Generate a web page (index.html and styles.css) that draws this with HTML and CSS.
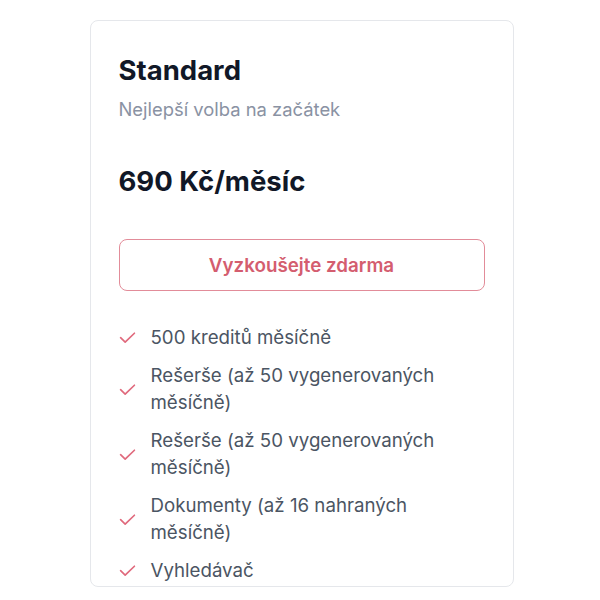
FILE: index.html
```html
<!DOCTYPE html>
<html lang="cs">
<head>
<meta charset="utf-8">
<title>Standard</title>
<link rel="stylesheet" href="styles.css">
</head>
<body>
<div class="page">
  <section class="plan">
    <h2 class="plan-name">Standard</h2>
    <p class="plan-tagline">Nejlepší volba na začátek</p>
    <p class="plan-price">690 Kč/měsíc</p>
    <button class="plan-cta" type="button">Vyzkoušejte zdarma</button>
    <ul class="features">
      <li class="feature"><svg class="check" viewBox="0 0 16 16"><path d="M1.5 8.2l4.3 4.1 8.7-8.3"/></svg><span>500 kreditů měsíčně</span></li>
      <li class="feature"><svg class="check" viewBox="0 0 16 16"><path d="M1.5 8.2l4.3 4.1 8.7-8.3"/></svg><span>Rešerše (až 50 vygenerovaných měsíčně)</span></li>
      <li class="feature"><svg class="check" viewBox="0 0 16 16"><path d="M1.5 8.2l4.3 4.1 8.7-8.3"/></svg><span>Rešerše (až 50 vygenerovaných měsíčně)</span></li>
      <li class="feature"><svg class="check" viewBox="0 0 16 16"><path d="M1.5 8.2l4.3 4.1 8.7-8.3"/></svg><span>Dokumenty (až 16 nahraných měsíčně)</span></li>
      <li class="feature"><svg class="check" viewBox="0 0 16 16"><path d="M1.5 8.2l4.3 4.1 8.7-8.3"/></svg><span>Vyhledávač</span></li>
    </ul>
  </section>
</div>
</body>
</html>
```

FILE: styles.css
```css
* { box-sizing: border-box; }

html, body {
  margin: 0;
  padding: 0;
  background: #ffffff;
}

body {
  font-family: Inter, "Liberation Sans", sans-serif;
  color: #111827;
}

.page {
  display: flex;
  justify-content: center;
  padding: 20px 0 0 3px;
}

.plan {
  width: 424px;
  height: 567px;
  border: 1px solid #e5e7eb;
  border-radius: 8px;
  padding: 32px 28px 4px;
  overflow: hidden;
  display: flex;
  flex-direction: column;
}

.plan-name {
  margin: 0;
  font-size: 27.5px;
  line-height: 34px;
  font-weight: 700;
  color: #111827;
}

.plan-tagline {
  margin: 10px 0 0;
  font-size: 18.4px;
  line-height: 24px;
  color: #8a92a3;
}

.plan-price {
  margin: 43px 0 0;
  font-size: 27.5px;
  line-height: 34px;
  font-weight: 700;
  color: #111827;
}

.plan-cta {
  flex: none;
  margin-top: 41px;
  height: 52px;
  width: 100%;
  background: #fff;
  border: 1.5px solid #e28c99;
  border-radius: 8px;
  font-family: inherit;
  font-size: 18.8px;
  font-weight: 600;
  color: #d45d6f;
  cursor: pointer;
}

.features {
  list-style: none;
  margin: 33px 0 0;
  padding: 0;
  display: flex;
  flex-direction: column;
  gap: 11px;
}

.feature {
  display: flex;
  align-items: center;
  gap: 15px;
  font-size: 18.7px;
  line-height: 27px;
  color: #4b5563;
}

.check {
  flex: none;
  width: 17px;
  height: 17px;
  fill: none;
  stroke: #e06a7d;
  stroke-width: 1.6;
  stroke-linecap: round;
  stroke-linejoin: round;
}
```
